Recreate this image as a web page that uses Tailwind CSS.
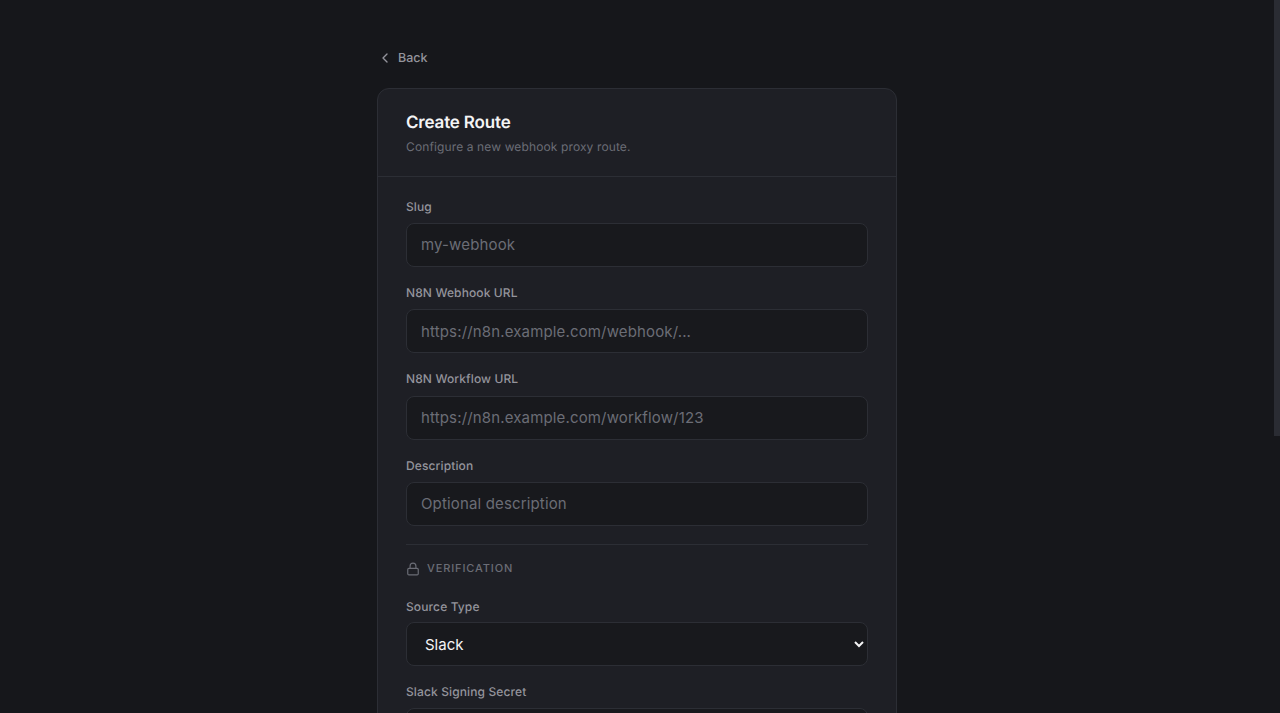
<!DOCTYPE html>
<html lang="en" class="bg-[#16171b]">
<head>
<meta charset="utf-8">
<title>Create Route</title>
<script src="https://cdn.jsdelivr.net/npm/@tailwindcss/browser@4"></script>
</head>
<body class="bg-[#16171b] pr-[6px] font-['Inter',sans-serif] text-[#f4f4f5] antialiased [text-rendering:geometricPrecision]">
<main class="mx-auto w-[520px] pt-[48px] pb-[48px]">
  <a class="flex items-center gap-[5px] h-[19px] pt-[1px] text-[12.5px] font-medium text-[#94949c]">
    <svg class="w-[16px] h-[16px]" viewBox="0 0 24 24" fill="none" stroke="currentColor" stroke-width="2" stroke-linecap="round" stroke-linejoin="round"><path d="m15 18-6-6 6-6"/></svg>
    <span class="pt-[2px]">Back</span>
  </a>
  <section class="mt-[21px] rounded-[12px] border border-[#2c2e35] bg-[#1e1f25]">
    <header class="border-b border-[#2c2e35] px-[28px] pt-[21px] pb-[19.58px]">
      <h1 class="text-[17px] leading-[26px] font-semibold tracking-[-0.01em] text-[#f4f4f5]">Create Route</h1>
      <p class="mt-[1px] text-[12px] leading-[19px] tracking-[0.01em] text-[#6b6d76]">Configure a new webhook proxy route.</p>
    </header>
    <form class="flex flex-col gap-[16px] px-[28px] pt-[20px] pb-[28px]">
      <div>
        <label class="block mb-[5.83px] text-[12px] leading-[20.5px] font-medium tracking-[0.01em] text-[#94949c]">Slug</label>
        <input class="block w-full h-[44px] px-[14px] rounded-[8px] border border-[#2c2e35] bg-[#18191d] text-[15px] tracking-[0.01em] placeholder:text-[#6b6d76]" placeholder="my-webhook">
      </div>
      <div>
        <label class="block mb-[5.83px] text-[12px] leading-[20.5px] font-medium tracking-[0.01em] text-[#94949c]">N8N Webhook URL</label>
        <input class="block w-full h-[44px] px-[14px] rounded-[8px] border border-[#2c2e35] bg-[#18191d] text-[15px] tracking-[0.01em] placeholder:text-[#6b6d76]" placeholder="https://n8n.example.com/webhook/...">
      </div>
      <div>
        <label class="block mb-[5.83px] text-[12px] leading-[20.5px] font-medium tracking-[0.01em] text-[#94949c]">N8N Workflow URL</label>
        <input class="block w-full h-[44px] px-[14px] rounded-[8px] border border-[#2c2e35] bg-[#18191d] text-[15px] tracking-[0.01em] placeholder:text-[#6b6d76]" placeholder="https://n8n.example.com/workflow/123">
      </div>
      <div>
        <label class="block mb-[5.83px] text-[12px] leading-[20.5px] font-medium tracking-[0.01em] text-[#94949c]">Description</label>
        <input class="block w-full h-[44px] px-[14px] rounded-[8px] border border-[#2c2e35] bg-[#18191d] text-[15px] tracking-[0.01em] placeholder:text-[#6b6d76]" placeholder="Optional description">
      </div>
      <div class="mt-[2px] mb-[3.83px] border-t border-[#2c2e35] pt-[14px] flex items-center gap-[7px] h-[33px] text-[#6b6d76]">
        <svg class="w-[14px] h-[14px] mt-[2px]" viewBox="0 0 24 24" fill="none" stroke="currentColor" stroke-width="2" stroke-linecap="round" stroke-linejoin="round"><rect x="3" y="11" width="18" height="11" rx="2"/><path d="M7 11V7a5 5 0 0 1 10 0v4"/></svg>
        <span class="text-[11px] font-medium tracking-[0.08em]">VERIFICATION</span>
      </div>
      <div>
        <label class="block mb-[5.83px] text-[12px] leading-[19.5px] font-medium tracking-[0.01em] text-[#94949c]">Source Type</label>
        <select class="block w-full h-[44px] px-[14px] rounded-[8px] border border-[#2c2e35] bg-[#18191d] text-[15px] text-[#f4f4f5]"><option>Slack</option></select>
      </div>
      <div>
        <label class="block mb-[5.83px] text-[12px] leading-[20.5px] font-medium tracking-[0.01em] text-[#94949c]">Slack Signing Secret</label>
        <input class="block w-full h-[44px] px-[14px] rounded-[8px] border border-[#2c2e35] bg-[#18191d] text-[15px]">
      </div>
      <div>
        <label class="block mb-[5.83px] text-[12px] leading-[20.5px] font-medium tracking-[0.01em] text-[#94949c]">Timeout</label>
        <input class="block w-full h-[44px] px-[14px] rounded-[8px] border border-[#2c2e35] bg-[#18191d] text-[15px]">
      </div>
      <div class="flex justify-end gap-[8px]">
        <button type="button" class="h-[40px] px-[16px] rounded-[8px] border border-[#2c2e35] text-[13px] text-[#a1a1aa]">Cancel</button>
        <button type="button" class="h-[40px] px-[16px] rounded-[8px] bg-[#f4f4f5] text-[13px] font-medium text-[#18191d]">Create Route</button>
      </div>
    </form>
  </section>
</main>
<div class="fixed top-0 right-0 w-[6px] h-[436px] bg-[#2a2c33]"></div>
</body>
</html>
